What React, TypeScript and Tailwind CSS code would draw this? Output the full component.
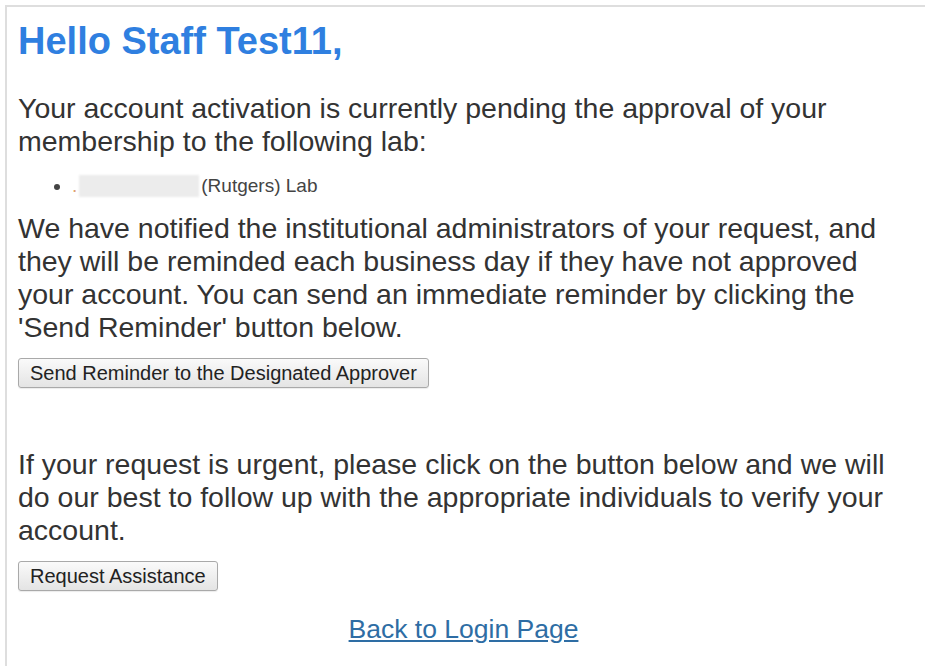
import React from "react";

const App: React.FC = () => {
  const btn =
    "block border border-[#a9a9a9] rounded-[3px] bg-gradient-to-b from-[#fafafa] to-[#e4e4e4] text-[20px] leading-[28px] px-[11px] text-[#222] shadow-[0_1px_1px_rgba(0,0,0,0.08)]";

  return (
    <div
      className="min-h-[666px] bg-white pt-[5px] pl-[5px]"
      style={{ fontFamily: '"Liberation Sans", Arial, sans-serif' }}
    >
      <div className="border-t-2 border-l-2 border-[#dedede] min-h-[661px] pl-[11px] pt-[12px] text-[#333]">
        <h1 className="text-[38px] leading-[44px] font-bold text-[#2f7fe0]">Hello Staff Test11,</h1>

        <p className="mt-[29px] text-[28.5px] leading-[33px]">
          Your account activation is currently pending the approval of your
          <br />
          membership to the following lab:
        </p>

        <ul className="mt-[16px] ml-[54px] list-disc text-[19px] leading-[24px] text-[#444]">
          <li>
            <span className="inline-flex items-center">
              <span className="text-[#e0a070] mr-[2px]">.</span>
              <span className="inline-block w-[120px] h-[22px] bg-[#ececec] blur-[1px] mr-[2px]"></span>
              (Rutgers) Lab
            </span>
          </li>
        </ul>

        <p className="mt-[14px] text-[28.5px] leading-[33px]">
          We have notified the institutional administrators of your request, and
          <br />
          they will be reminded each business day if they have not approved
          <br />
          your account. You can send an immediate reminder by clicking the
          <br />
          'Send Reminder' button below.
        </p>

        <button className={`${btn} mt-[14px]`}>Send Reminder to the Designated Approver</button>

        <p className="mt-[60px] text-[28.5px] leading-[33px]">
          If your request is urgent, please click on the button below and we will
          <br />
          do our best to follow up with the appropriate individuals to verify your
          <br />
          account.
        </p>

        <button className={`${btn} mt-[14px]`}>Request Assistance</button>

        <div className="mt-[22px] text-center pr-[16px]">
          <a href="#" className="text-[26.5px] leading-[32px] text-[#2e6da4] underline">
            Back to Login Page
          </a>
        </div>
      </div>
    </div>
  );
};

export default App;
